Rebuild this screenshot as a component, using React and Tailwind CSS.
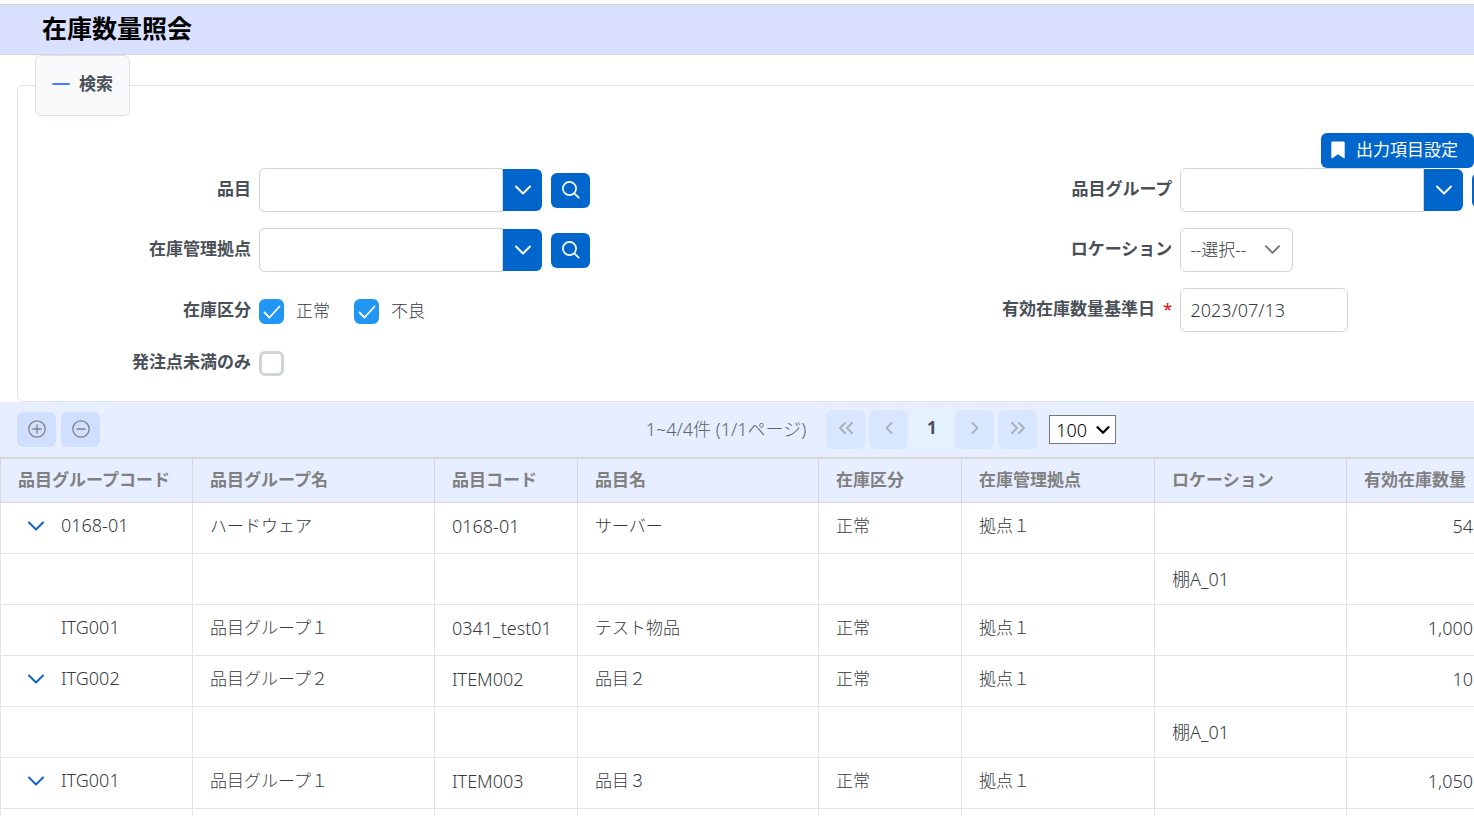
import React, { useState } from "react";

const columns = [
  { label: "品目グループコード", width: "w-[192px]" },
  { label: "品目グループ名", width: "w-[242px]" },
  { label: "品目コード", width: "w-[143px]" },
  { label: "品目名", width: "w-[241px]" },
  { label: "在庫区分", width: "w-[143px]" },
  { label: "在庫管理拠点", width: "w-[193px]" },
  { label: "ロケーション", width: "w-[192px]" },
  { label: "有効在庫数量", width: "w-[144px]" },
];

const items = [
  { id: 1, group: "0168-01", groupName: "ハードウェア", code: "0168-01", name: "サーバー", kind: "正常", site: "拠点１", qty: "54", shelves: ["棚A_01"] },
  { id: 2, group: "ITG001", groupName: "品目グループ１", code: "0341_test01", name: "テスト物品", kind: "正常", site: "拠点１", qty: "1,000", shelves: [] },
  { id: 3, group: "ITG002", groupName: "品目グループ２", code: "ITEM002", name: "品目２", kind: "正常", site: "拠点１", qty: "10", shelves: ["棚A_01"] },
  { id: 4, group: "ITG001", groupName: "品目グループ１", code: "ITEM003", name: "品目３", kind: "正常", site: "拠点１", qty: "1,050", shelves: [""] },
];

const Icon = ({ children, className = "size-[18px]", strokeWidth = 1.5 }) => (
  <svg
    viewBox="0 0 18 18"
    fill="none"
    stroke="currentColor"
    strokeWidth={strokeWidth}
    strokeLinecap="round"
    strokeLinejoin="round"
    className={className}
    aria-hidden="true"
  >
    {children}
  </svg>
);

const ChevronDown = (props) => (
  <Icon strokeWidth={2} {...props}>
    <path d="M2 5.5l7 7 7-7" />
  </Icon>
);

const Label = ({ htmlFor, required, children }) => (
  <label htmlFor={htmlFor} className="pb-[2px] text-right font-bold whitespace-nowrap">
    {children}
    {required && <span className="ml-2 font-normal text-red-600">*</span>}
  </label>
);

const LookupField = ({ id, label }) => (
  <>
    <Label htmlFor={id}>{label}</Label>
    <div className="flex h-11 items-center">
      <input
        id={id}
        type="text"
        className="h-11 w-[244px] rounded-l-md border border-[#ced4da] bg-white px-2 outline-none focus:border-[#2196f3]"
      />
      <button
        type="button"
        aria-label={`${label}の候補`}
        className="flex h-[42px] w-[39px] items-center justify-center rounded-r-md bg-[#0066cc] text-white"
      >
        <ChevronDown />
      </button>
      <button
        type="button"
        aria-label={`${label}を検索`}
        className="ml-[9px] flex h-[35px] w-[39px] items-center justify-center rounded-md bg-[#0066cc] text-white"
      >
        <Icon strokeWidth={1.7}>
          <circle cx="7.5" cy="7.5" r="6.6" />
          <path d="M12.300 12.300l4.400 4.400" />
        </Icon>
      </button>
    </div>
  </>
);

const Checkbox = ({ id, checked, onChange }) => (
  <span className="relative inline-flex size-[25px]">
    <input
      id={id}
      type="checkbox"
      checked={checked}
      onChange={(e) => onChange(e.target.checked)}
      className="size-[25px] appearance-none rounded-md border-3 border-[#ced4da] bg-white checked:border-[#2196f3] checked:bg-[#2196f3]"
    />
    {checked && (
      <Icon className="pointer-events-none absolute inset-1 size-[18px] text-white" strokeWidth={1.8}>
        <path d="M1.5 9.5l5 5L16.5 3.5" />
      </Icon>
    )}
  </span>
);

const PageButton = ({ label, children }) => (
  <button
    type="button"
    aria-label={label}
    disabled
    className="flex size-[39px] items-center justify-center rounded-md bg-[#d8e6ff] pb-1 text-[#a9afb8]"
  >
    <Icon strokeWidth={1.8}>{children}</Icon>
  </button>
);

const App = () => {
  const [searchOpen, setSearchOpen] = useState(true);
  const [normal, setNormal] = useState(true);
  const [defective, setDefective] = useState(true);
  const [belowOrderPoint, setBelowOrderPoint] = useState(false);
  const [baseDate, setBaseDate] = useState("2023/07/13");
  const [closed, setClosed] = useState([]);

  const toggleRow = (id) => {
    setClosed((prev) =>
      prev.includes(id) ? prev.filter((x) => x !== id) : [...prev, id]
    );
  };

  return (
    <div className="h-screen overflow-hidden bg-white pt-1 font-['Noto_Sans','Noto_Sans_CJK_JP',sans-serif] text-[17px] leading-6 font-light text-[#343a40]">
      <header className="flex h-[51px] items-center border-y border-[#d5d5d9] bg-[#dae0ff] px-[42px] pb-1">
        <h1 className="text-[25px] font-bold text-black">在庫数量照会</h1>
      </header>

      {/* Search conditions */}
      <fieldset className="-mr-4 ml-[17px] rounded-md border border-[#dee2e6] pb-[25px]">
        <legend className="ml-[17px]">
          <button
            type="button"
            onClick={() => setSearchOpen(!searchOpen)}
            className="flex h-[61px] items-center gap-[9px] rounded-md border border-[#dee2e6] bg-[#f8f9fa] px-4 pb-[3px] font-bold text-[#495057]"
          >
            <Icon className="size-[18px] text-[#4f7cff]" strokeWidth={1.8}>
              <path d="M1 9h16" />
              {!searchOpen && <path d="M9 1v16" />}
            </Icon>
            検索
          </button>
        </legend>

        {searchOpen && (
          <>
            <div className="mr-[15px] flex justify-end pt-[17px]">
              <button
                type="button"
                className="flex h-[35px] items-center gap-[9px] rounded-md bg-[#0066cc] pr-4 pb-[2px] pl-2 font-normal text-white"
              >
                <svg viewBox="0 0 18 18" fill="currentColor" className="size-[18px]" aria-hidden="true">
                  <path d="M3.5.5h11a1.200 1.200 0 0 1 1.200 1.200v15a.6.6 0 0 1-1 .5L9 13.300l-5.700 3.900a.6.6 0 0 1-1-.5v-15A1.200 1.200 0 0 1 3.500.5z" />
                </svg>
                出力項目設定
              </button>
            </div>

            <div className="grid w-[calc(125%+4px)] grid-cols-2 text-[#495057]">
              <div className="grid grid-cols-[233px_1fr] content-start items-center gap-x-2 gap-y-4">
                <LookupField id="item" label="品目" />
                <LookupField id="site" label="在庫管理拠点" />

                <Label htmlFor="normal">在庫区分</Label>
                <div className="flex h-[46px] items-center gap-3 text-[#343a40]">
                  <Checkbox id="normal" checked={normal} onChange={setNormal} />
                  <label htmlFor="normal" className="mr-3">正常</label>
                  <Checkbox id="defective" checked={defective} onChange={setDefective} />
                  <label htmlFor="defective">不良</label>
                </div>

                <Label htmlFor="order-point">発注点未満のみ</Label>
                <Checkbox id="order-point" checked={belowOrderPoint} onChange={setBelowOrderPoint} />
              </div>

              <div className="grid grid-cols-[233px_1fr] content-start items-center gap-x-2 gap-y-4">
                <LookupField id="group" label="品目グループ" />

                <Label htmlFor="location">ロケーション</Label>
                <div className="relative h-11 w-[113px]">
                  <select
                    id="location"
                    className="h-11 w-full appearance-none rounded-md border border-[#ced4da] bg-white pl-[9px] text-[#343a40]"
                  >
                    <option>--選択--</option>
                  </select>
                  <ChevronDown
                    className="pointer-events-none absolute top-[13px] right-3 size-[17px] text-[#6c757d]"
                  />
                </div>

                <Label htmlFor="base-date" required>有効在庫数量基準日</Label>
                <input
                  id="base-date"
                  type="text"
                  value={baseDate}
                  onChange={(e) => setBaseDate(e.target.value)}
                  className="h-11 w-[168px] rounded-md border border-[#ced4da] bg-white px-[9px] text-lg text-[#343a40]"
                />
              </div>
            </div>
          </>
        )}
      </fieldset>

      {/* Toolbar and paginator */}
      <div className="bg-[#e7eeff]">
        <div className="grid h-[55px] w-[calc(119%+8px)] grid-cols-[1fr_auto_1fr] items-center">
          <div className="flex gap-[5px] pl-[17px]">
            <button
              type="button"
              aria-label="すべて開く"
              onClick={() => setClosed([])}
              className="flex h-[35px] w-[39px] items-center justify-center rounded-md bg-[#d0dfff] pb-[2px] text-[#808080]"
            >
              <Icon strokeWidth={1.3}>
                <circle cx="9" cy="9" r="8.2" />
                <path d="M5 9h8M9 5v8" />
              </Icon>
            </button>
            <button
              type="button"
              aria-label="すべて閉じる"
              onClick={() => setClosed(items.map((item) => item.id))}
              className="flex h-[35px] w-[39px] items-center justify-center rounded-md bg-[#d0dfff] pb-[2px] text-[#808080]"
            >
              <Icon strokeWidth={1.3}>
                <circle cx="9" cy="9" r="8.2" />
                <path d="M5 9h8" />
              </Icon>
            </button>
          </div>

          <div className="flex items-center gap-1">
            <span className="mr-4 pb-[2px] text-lg leading-6 text-[#5c656d]">1~4/4件 (1/1ページ)</span>
            <PageButton label="最初のページ">
              <path d="M8 4l-5 5 5 5M15 4l-5 5 5 5" />
            </PageButton>
            <PageButton label="前のページ">
              <path d="M11.500 4l-5 5 5 5" />
            </PageButton>
            <button
              type="button"
              aria-current="page"
              className="size-[39px] rounded-md bg-[#e3f2fd] pb-1 font-bold text-[#495057]"
            >
              1
            </button>
            <PageButton label="次のページ">
              <path d="M6.500 4l5 5-5 5" />
            </PageButton>
            <PageButton label="最後のページ">
              <path d="M3 4l5 5-5 5M10 4l5 5-5 5" />
            </PageButton>
            <div className="relative ml-2">
              <select
                aria-label="表示件数"
                className="block h-[29px] w-[67px] appearance-none border border-[#767676] bg-white pl-[6px] text-lg leading-6 text-black"
              >
                <option>100</option>
              </select>
              <ChevronDown
                className="pointer-events-none absolute top-2 right-[6px] size-[14px] text-black"
                strokeWidth={3}
              />
            </div>
          </div>
        </div>
      </div>

      <table className="w-[calc(100%+16px)] table-fixed border-collapse">
        <thead>
          <tr className="h-[44px] border-t-2 border-b border-[#d8d8d8] bg-[#e7eeff] text-[#808080]">
            {columns.map((column) => (
              <th
                key={column.label}
                className={`${column.width} border-x border-[#d8d8d8] pl-[17px] text-left font-bold whitespace-nowrap`}
              >
                {column.label}
              </th>
            ))}
          </tr>
        </thead>
        <tbody>
          {items.map((item) => {
            const open = !closed.includes(item.id);
            return (
              <React.Fragment key={item.id}>
                <tr className="h-[51px] border-b border-[#e4e4e6] [&>td]:border-x [&>td]:border-[#e4e4e6] [&>td]:px-[17px] [&>td]:pb-[3px]">
                  <td>
                    <div className="flex items-center gap-2">
                      <span className="flex w-[35px] justify-center">
                        {item.shelves.length > 0 && (
                          <button
                            type="button"
                            aria-label={open ? "閉じる" : "開く"}
                            onClick={() => toggleRow(item.id)}
                            className="flex size-[35px] items-center justify-center text-[#0f62cc]"
                          >
                            <ChevronDown />
                          </button>
                        )}
                      </span>
                      <span className="pb-[2px] text-lg leading-6">{item.group}</span>
                    </div>
                  </td>
                  <td>{item.groupName}</td>
                  <td className="text-lg leading-6">{item.code}</td>
                  <td>{item.name}</td>
                  <td>{item.kind}</td>
                  <td>{item.site}</td>
                  <td></td>
                  <td className="text-right text-lg leading-6">{item.qty}</td>
                </tr>
                {open &&
                  item.shelves.map((shelf) => (
                    <tr
                      key={shelf}
                      className="h-[51px] border-b border-[#e4e4e6] [&>td]:border-x [&>td]:border-[#e4e4e6] [&>td]:px-[17px]"
                    >
                      <td></td>
                      <td></td>
                      <td></td>
                      <td></td>
                      <td></td>
                      <td></td>
                      <td className="text-lg leading-6">{shelf}</td>
                      <td></td>
                    </tr>
                  ))}
              </React.Fragment>
            );
          })}
        </tbody>
      </table>
    </div>
  );
};

export default App;
